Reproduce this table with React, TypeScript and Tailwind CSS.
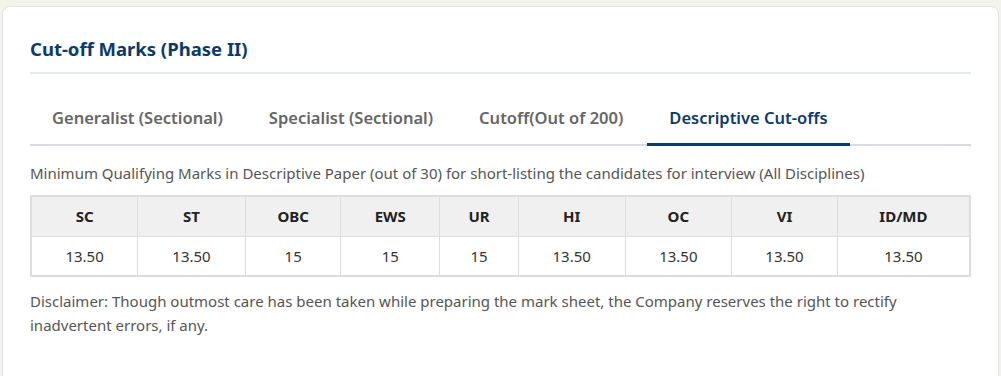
import React from 'react';

const tabs = ['Generalist (Sectional)', 'Specialist (Sectional)', 'Cutoff(Out of 200)', 'Descriptive Cut-offs'];

const columns = [
  { head: 'SC', value: '13.50', w: 'w-[107px]' },
  { head: 'ST', value: '13.50', w: 'w-[108px]' },
  { head: 'OBC', value: '15', w: 'w-[96px]' },
  { head: 'EWS', value: '15', w: 'w-[99px]' },
  { head: 'UR', value: '15', w: 'w-[79px]' },
  { head: 'HI', value: '13.50', w: 'w-[107px]' },
  { head: 'OC', value: '13.50', w: 'w-[107px]' },
  { head: 'VI', value: '13.50', w: 'w-[106px]' },
  { head: 'ID/MD', value: '13.50', w: 'w-[133px]' },
];

const App: React.FC = () => {
  const active = 3;

  return (
    <div className="h-[376px] overflow-hidden bg-[#f3f4e9] pt-[6px] px-[2px] font-['Noto_Sans',sans-serif]">
      <div className="bg-white border border-[#dde3e6] rounded-[8px] px-[27px] pt-[27px] h-[400px]">
        <h2 className="text-[18.5px] font-bold text-[#0b3a6b] leading-[30px] pb-[8px] border-b-2 border-[#e5eaec]">
          Cut-off Marks (Phase II)
        </h2>

        <div className="mt-[32px] flex border-b-2 border-[#d9dcdf]">
          {tabs.map((t, i) => (
            <button
              key={t}
              className={
                i === active
                  ? 'px-[22px] pb-[13px] text-[16.5px] leading-[24px] font-semibold text-[#0b3a6b] border-b-[3px] border-[#0b3a6b] -mb-[2px] mr-[2px]'
                  : 'px-[22px] pb-[13px] text-[16.5px] leading-[24px] font-semibold text-[#666666] border-b-[3px] border-transparent -mb-[2px] mr-[2px]'
              }
            >
              {t}
            </button>
          ))}
        </div>

        <p className="mt-[15px] text-[15px] leading-[24px] text-[#555555]">
          Minimum Qualifying Marks in Descriptive Paper (out of 30) for short-listing the candidates for interview (All Disciplines)
        </p>

        <table className="mt-[10px] w-full border-collapse border-2 border-[#dddddd] text-[15px]">
          <thead>
            <tr className="bg-[#f0f0f0]">
              {columns.map(c => (
                <th key={c.head} className={`${c.w} h-[40px] border border-[#dddddd] font-bold text-[#222222] text-center`}>
                  {c.head}
                </th>
              ))}
            </tr>
          </thead>
          <tbody>
            <tr>
              {columns.map(c => (
                <td key={c.head} className="h-[40px] border border-[#dddddd] text-center text-[#333333]">
                  {c.value}
                </td>
              ))}
            </tr>
          </tbody>
        </table>

        <p className="mt-[12px] text-[15px] leading-[24px] text-[#555555] pr-[40px]">
          Disclaimer: Though outmost care has been taken while preparing the mark sheet, the Company reserves the right to rectify inadvertent errors, if any.
        </p>
      </div>
    </div>
  );
};

export default App;
